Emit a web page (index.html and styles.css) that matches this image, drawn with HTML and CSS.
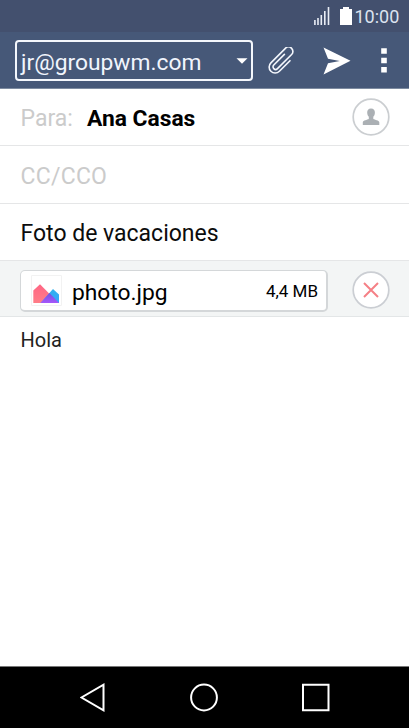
FILE: index.html
```html
<!DOCTYPE html>
<html lang="es">
<head>
<meta charset="utf-8">
<title>Correo</title>
<link rel="stylesheet" href="styles.css">
</head>
<body>
<div class="phone">
  <div class="status">
    <svg class="signal" width="16" height="18" viewBox="0 0 16 18"><path d="M.9 13v5M4 11v7M7.300 8v10M10.800 4v14M14.500 0v18" stroke="#e9edf5" stroke-width="1.6" fill="none"/></svg>
    <svg class="battery" width="12" height="18" viewBox="0 0 12 18"><path d="M3 0h6v2h3v16H0V2h3z" fill="#fff"/></svg>
    <span class="clock">10:00</span>
  </div>
  <header class="toolbar">
    <div class="account"><span>jr@groupwm.com</span><svg width="12" height="6" viewBox="0 0 12 6"><path d="M.5.2h11L6 5.800z" fill="#fff"/></svg></div>
    <svg class="clip" width="28" height="28" viewBox="0 0 28 28"><path transform="translate(13.500 13.700) rotate(45)" d="M6-6V9A6 6 0 0 1-6 9V-11.500a4.400 4.400 0 0 1 8.800 0V8.500a2.600 2.600 0 0 1-5.200 0V-6.500" fill="none" stroke="#f4f7fd" stroke-width="1.6" stroke-linecap="round"/></svg>
    <svg class="send" width="28" height="28" viewBox="0 0 28 28"><path d="M.5.5 27.500 13.800.5 27.400l4.500-11.200 11.800-2.200-11.800-2.200z" fill="#fff"/></svg>
    <svg class="more" width="6" height="26" viewBox="0 0 6 26"><path d="M.2.2h5.600v5.600H.2zM.2 9.700h5.600v5.600H.2zM.2 19h5.600v5.600H.2z" fill="#fff"/></svg>
  </header>
  <main>
    <div class="row to"><span class="hint">Para:</span><b>Ana Casas</b>
      <svg class="round" width="38" height="38" viewBox="0 0 38 38"><circle cx="19" cy="19" r="17.800" fill="#fff" stroke="#cbced1" stroke-width="1.700"/><path d="M19 10.500c2.700 0 4 1.700 3.900 4.300-.1 1.900-.7 3.200-1.600 4v2.300c1.700.8 5.600 1.400 6 3.200V27H10.800v-2.700c.4-1.800 4.300-2.400 6-3.200v-2.300c-.9-.8-1.500-2.100-1.600-4-.1-2.600 1.200-4.300 3.800-4.300z" fill="#abb0b4"/></svg>
    </div>
    <div class="row cc"><span class="hint">CC/CCO</span></div>
    <div class="row subject"><span>Foto de vacaciones</span></div>
    <div class="attachments">
      <div class="file">
        <svg class="thumb" width="31" height="31" viewBox="0 0 31 31"><defs><linearGradient id="r" x2="0" y2="1"><stop stop-color="#ff6684"/><stop offset="1" stop-color="#ff7d87"/></linearGradient><linearGradient id="b" x2="0" y2="1"><stop stop-color="#30b2ee"/><stop offset="1" stop-color="#38a5fc"/></linearGradient><linearGradient id="p" x2="0" y2="1"><stop stop-color="#7253dc"/><stop offset="1" stop-color="#a657fb"/></linearGradient></defs><path d="M.5.5h30v30H.5z" fill="#fff" stroke="#f2f2f2"/><path d="M2.300 15.500 9 9.300 27.500 28H2.300z" fill="url(#r)"/><path d="M9.500 28 22 14l6 5.500V28z" fill="url(#b)"/><path d="m9.500 28 9-10 9.500 10z" fill="url(#p)"/></svg>
        <span class="name">photo.jpg</span><span class="size">4,4 MB</span>
      </div>
      <svg class="round" width="38" height="38" viewBox="0 0 38 38"><circle cx="19" cy="19" r="17.800" fill="#fff" stroke="#cbced3" stroke-width="1.700"/><path d="m12 12 14 14M26 12 12 26" stroke="#f58086" stroke-width="2" fill="none"/></svg>
    </div>
    <div class="message"><span>Hola</span></div>
  </main>
  <nav>
    <svg width="26" height="30" viewBox="0 0 26 30"><path d="M23.500 2.700v25.600L1.500 15.500z" fill="none" stroke="#fff" stroke-width="2"/></svg>
    <svg width="30" height="30" viewBox="0 0 30 30"><circle cx="15" cy="15.500" r="12.900" fill="none" stroke="#fff" stroke-width="2"/></svg>
    <svg width="30" height="30" viewBox="0 0 30 30"><path d="M2 2.800h25.500v25.500H2z" fill="none" stroke="#fff" stroke-width="2"/></svg>
  </nav>
</div>
</body>
</html>
```
FILE: styles.css
```css
* { box-sizing: border-box; }
body { margin: 0; font-family: Roboto, sans-serif; color: #0c0c0c; }
svg { display: block; flex: none; }
span, b { white-space: nowrap; }
.phone { width: 409px; height: 728px; display: flex; flex-direction: column; background: #fff; overflow: hidden; }
.status { height: 32px; flex: none; display: flex; justify-content: flex-end; align-items: flex-start; padding: 7px 10px 0 0; background: #43506e; }
.battery { margin: 0 3px 0 10px; }
.clock { width: 44.5px; font-size: 18px; line-height: 20px; color: #dce3f0; }
.toolbar { height: 57px; flex: none; display: flex; align-items: flex-start; background: #465878; border-bottom: 1px solid #7d8ba0; padding: 8px 0 0 15px; }
.account { width: 238px; height: 41px; border: 1.500px solid #f4f7fc; border-width: 2px; border-radius: 4px; display: flex; align-items: center; justify-content: space-between; padding: 5px 3px 0 4px; color: #f1f5fd; font-size: 22.800px; line-height: 30px; }
.account svg { margin-top: -5px; }
.clip { margin: 7px 0 0 15px; }
.send { margin: 7px 0 0 27px; }
.more { margin: 8px 0 0 30px; }
main { flex: 1; }
.row { display: flex; align-items: center; height: 58px; padding: 4px 19px 0 20.500px; border-bottom: 1px solid #e5e6e7; font-size: 23px; line-height: 30px; }
.row.to { height: 57px; padding-top: 4px; }
.row.subject { height: 57px; padding-top: 3px; }
.hint { color: #cbcbcb; }
.cc .hint { letter-spacing: .25px; }
.to .hint { width: 66.500px; }
.to b { color: #000; font-size: 22.800px; }
.row .round { margin: -4px 0 0 auto; }
.attachments { height: 56px; display: flex; align-items: flex-start; justify-content: space-between; padding: 9px 19px 0 20px; background: #f3f5f5; border-bottom: 1px solid #e3e6e7; }
.file { width: 308px; height: 42px; display: flex; align-items: center; border: 1px solid #d4d7d9; border-width: 1px 2px 2px 1px; border-radius: 5px; background: #fff; padding: 0 8px 0 10px; }
.attachments .round { margin-top: 1px; }
.thumb { margin-top: -1px; }
.name { margin: 3px 0 0 10px; font-size: 22.800px; color: #000; }
.size { margin: 0 0 0 auto; font-size: 17px; color: #000; }
.message { padding: 11px 20.500px; font-size: 20px; line-height: 24px; color: #222; }
nav { height: 62px; flex: none; display: flex; justify-content: space-between; background: #000; border-top: 1px solid #777; padding: 15px 78px 0 80px; }
```
